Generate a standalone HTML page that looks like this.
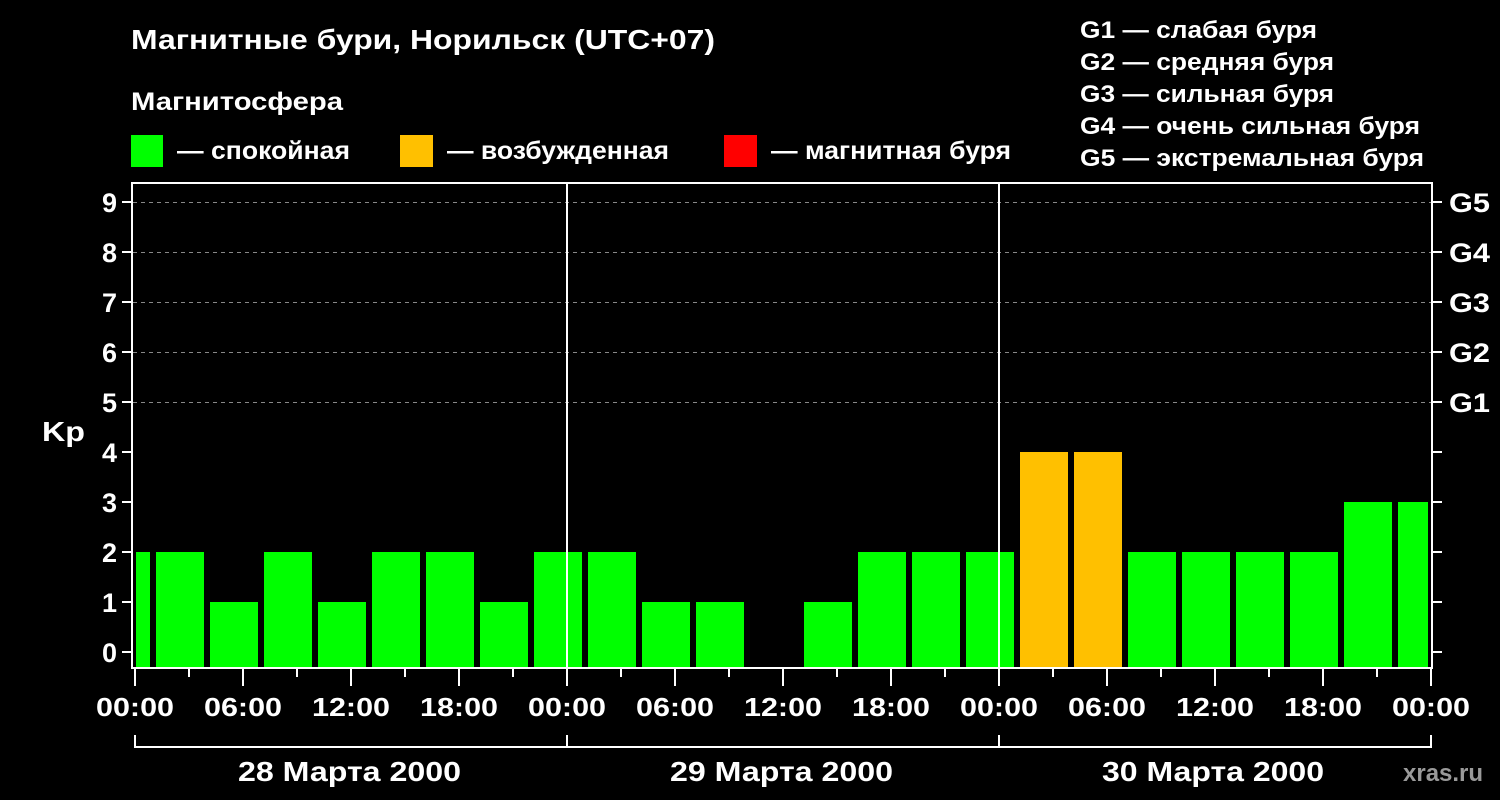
<!DOCTYPE html>
<html><head><meta charset="utf-8"><style>
html,body{margin:0;padding:0;background:#000;width:1500px;height:800px;overflow:hidden}
svg{display:block}
text{font-family:"Liberation Sans",Arial,sans-serif;font-weight:bold;fill:#fff}
</style></head><body>
<svg width="1500" height="800" viewBox="0 0 1500 800">
<rect width="1500" height="800" fill="#000"/>
<text x="131" y="49" font-size="28" textLength="584" lengthAdjust="spacingAndGlyphs">Магнитные бури, Норильск (UTC+07)</text>
<text x="131" y="110" font-size="25" textLength="212" lengthAdjust="spacingAndGlyphs">Магнитосфера</text>
<rect x="131" y="135" width="32" height="32" fill="#00ff00"/>
<text x="177" y="159" font-size="25" textLength="173" lengthAdjust="spacingAndGlyphs">— спокойная</text>
<rect x="400" y="135" width="33" height="32" fill="#ffc000"/>
<text x="447" y="159" font-size="25" textLength="222" lengthAdjust="spacingAndGlyphs">— возбужденная</text>
<rect x="724" y="135" width="33" height="32" fill="#ff0000"/>
<text x="771" y="159" font-size="25" textLength="240" lengthAdjust="spacingAndGlyphs">— магнитная буря</text>
<g font-size="24">
<text x="1080" y="38" textLength="237" lengthAdjust="spacingAndGlyphs">G1 — слабая буря</text>
<text x="1080" y="70" textLength="254" lengthAdjust="spacingAndGlyphs">G2 — средняя буря</text>
<text x="1080" y="102" textLength="254" lengthAdjust="spacingAndGlyphs">G3 — сильная буря</text>
<text x="1080" y="134" textLength="340" lengthAdjust="spacingAndGlyphs">G4 — очень сильная буря</text>
<text x="1080" y="166" textLength="344" lengthAdjust="spacingAndGlyphs">G5 — экстремальная буря</text>
</g>
<g stroke="#888" stroke-width="1" stroke-dasharray="4,4">
<line x1="133" y1="202.5" x2="1432" y2="202.5"/>
<line x1="133" y1="252.5" x2="1432" y2="252.5"/>
<line x1="133" y1="302.5" x2="1432" y2="302.5"/>
<line x1="133" y1="352.5" x2="1432" y2="352.5"/>
<line x1="133" y1="402.5" x2="1432" y2="402.5"/>
</g>
<g id="bars"></g>
<g stroke="#fff" stroke-width="2" fill="none">
<rect x="132" y="183" width="1300" height="485"/>
<line x1="567" y1="183" x2="567" y2="668"/>
<line x1="999" y1="183" x2="999" y2="668"/>
<line x1="135" y1="747" x2="1431" y2="747"/>
<line x1="135" y1="735" x2="135" y2="748"/>
<line x1="567" y1="735" x2="567" y2="748"/>
<line x1="999" y1="735" x2="999" y2="748"/>
<line x1="1431" y1="735" x2="1431" y2="748"/>
</g>
<g id="ticks" stroke="#fff" stroke-width="2"></g>
<g font-size="27" text-anchor="end">
<text x="117" y="662">0</text><text x="117" y="612">1</text><text x="117" y="562">2</text>
<text x="117" y="512">3</text><text x="117" y="462">4</text><text x="117" y="412">5</text>
<text x="117" y="362">6</text><text x="117" y="312">7</text><text x="117" y="262">8</text>
<text x="117" y="212">9</text>
</g>
<text x="42" y="441" font-size="28" textLength="43" lengthAdjust="spacingAndGlyphs">Kp</text>
<g font-size="27">
<text x="1449" y="212" textLength="41" lengthAdjust="spacingAndGlyphs">G5</text><text x="1449" y="262" textLength="41" lengthAdjust="spacingAndGlyphs">G4</text><text x="1449" y="312" textLength="41" lengthAdjust="spacingAndGlyphs">G3</text>
<text x="1449" y="362" textLength="41" lengthAdjust="spacingAndGlyphs">G2</text><text x="1449" y="412" textLength="41" lengthAdjust="spacingAndGlyphs">G1</text>
</g>
<g id="times" font-size="26"></g>
<g font-size="28">
<text x="238" y="781" textLength="223" lengthAdjust="spacingAndGlyphs">28 Марта 2000</text>
<text x="670" y="781" textLength="223" lengthAdjust="spacingAndGlyphs">29 Марта 2000</text>
<text x="1102" y="781" textLength="222" lengthAdjust="spacingAndGlyphs">30 Марта 2000</text>
</g>
<text x="1403" y="781" font-size="24" style="fill:#9a9a9a">xras.ru</text>
</svg>
<script>
var v=[2,2,1,2,1,2,2,1,2,2,1,1,0,1,2,2,2,4,4,2,2,2,2,3,3];
var g=document.getElementById('bars'),s='';
v.forEach(function(k,i){if(!k)return;var x=102+54*i,w=48;if(x<136){w=x+48-136;x=136;}if(x+w>1428)w=1428-x;var y=652-50*k;
s+='<rect x="'+x+'" y="'+y+'" width="'+w+'" height="'+(668-y)+'" fill="'+(k>=4?'#ffc000':'#00ff00')+'"/>';});
g.innerHTML=s;
var t='';for(var k=0;k<=9;k++){var y=652-50*k;t+='<line x1="122" y1="'+y+'" x2="132" y2="'+y+'"/><line x1="1432" y1="'+y+'" x2="1442" y2="'+y+'"/>';}
for(var i=0;i<=24;i++){var x=135+54*i;t+='<line x1="'+x+'" y1="669" x2="'+x+'" y2="'+(i%2?677:686)+'"/>';}
document.getElementById('ticks').innerHTML=t;
var lab=['00:00','06:00','12:00','18:00'],tm='';
for(var i=0;i<=12;i++){var x=135+108*i;tm+='<text x="'+(x-39)+'" y="716" textLength="78" lengthAdjust="spacingAndGlyphs">'+lab[i%4]+'</text>';}
document.getElementById('times').innerHTML=tm;
</script>
</body></html>
